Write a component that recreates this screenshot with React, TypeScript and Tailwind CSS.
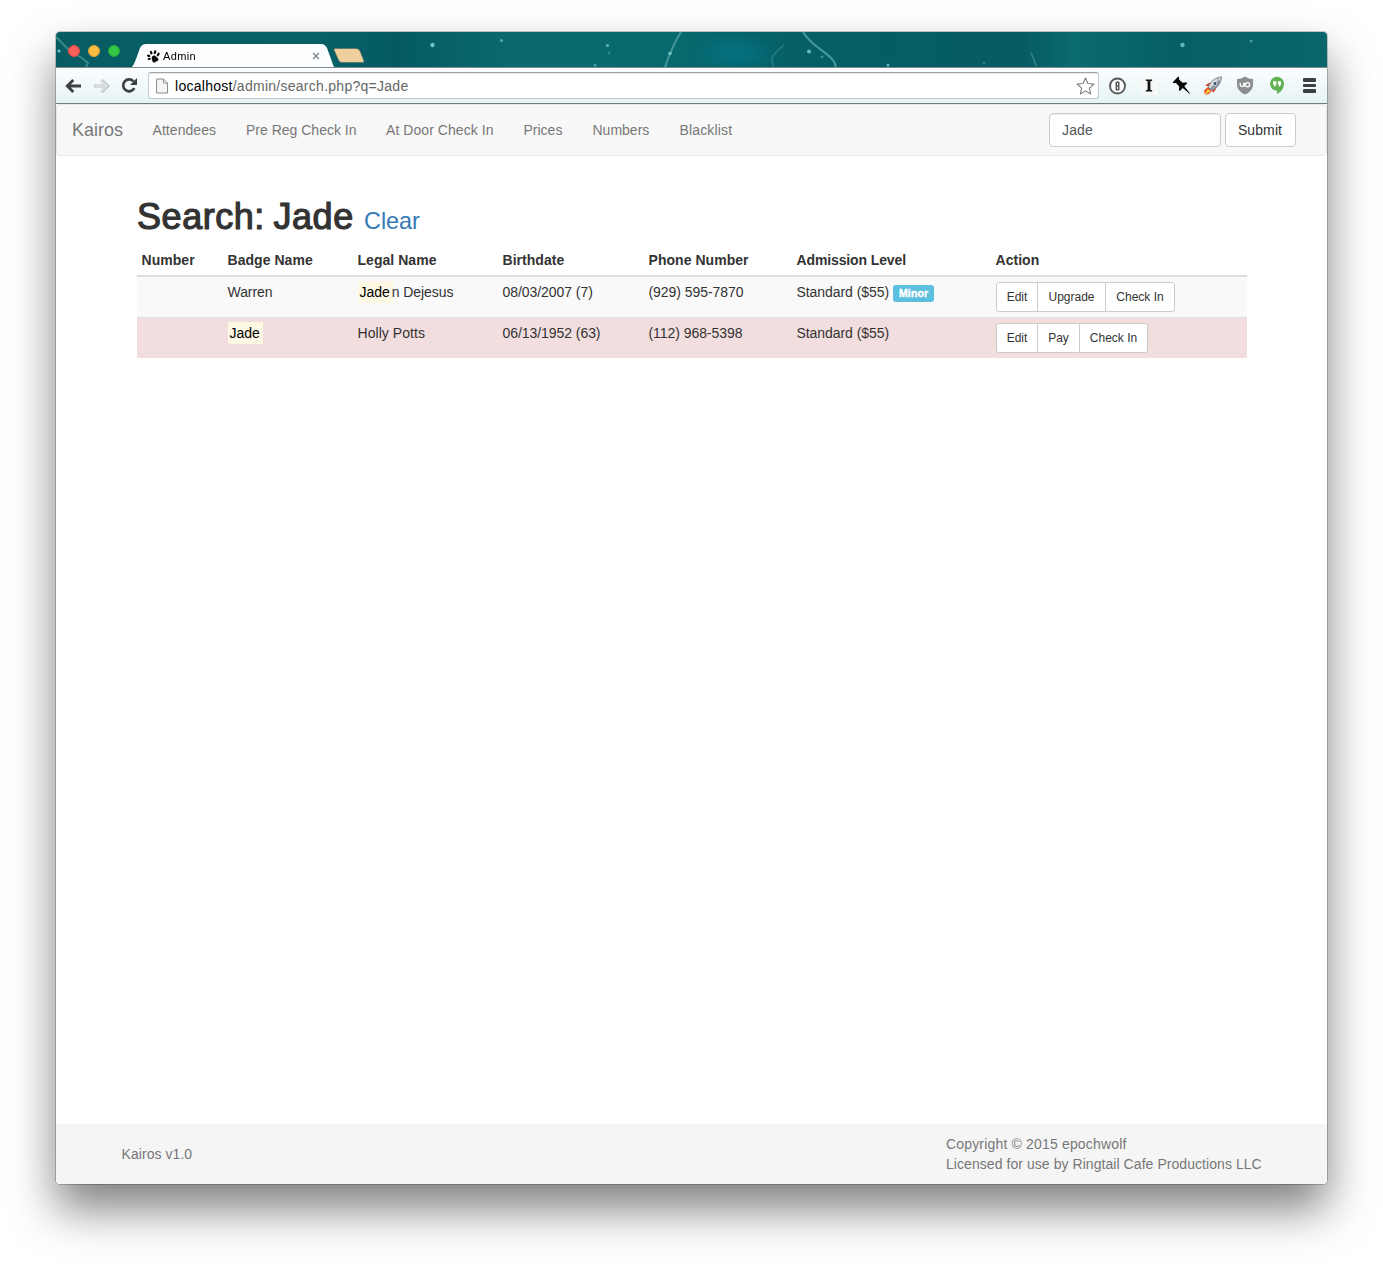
import React from 'react';

function SkyBackdrop() {
  return (
    <svg className="absolute inset-0" width="1271" height="35" viewBox="0 0 1271 35">
      <defs>
        <linearGradient id="sky" x1="0" x2="1" y1="0" y2="0">
          <stop offset="0" stopColor="#075c62" />
          <stop offset="0.2" stopColor="#086168" />
          <stop offset="0.27" stopColor="#055a62" />
          <stop offset="0.36" stopColor="#0a6a70" />
          <stop offset="0.5" stopColor="#07686e" />
          <stop offset="0.58" stopColor="#055f66" />
          <stop offset="0.76" stopColor="#065b61" />
          <stop offset="0.8" stopColor="#0a6b70" />
          <stop offset="0.88" stopColor="#055f66" />
          <stop offset="1" stopColor="#09666c" />
        </linearGradient>
        <radialGradient id="glow">
          <stop offset="0" stopColor="#04778a" stopOpacity=".75" />
          <stop offset="1" stopColor="#04778a" stopOpacity="0" />
        </radialGradient>
        <filter id="soft" x="-50%" y="-50%" width="200%" height="200%">
          <feGaussianBlur stdDeviation="0.7" />
        </filter>
      </defs>
      <rect width="1271" height="35" fill="url(#sky)" />
      <ellipse cx="680" cy="21" rx="45" ry="20" fill="url(#glow)" />
      <g fill="none" stroke="#5fa8a8" filter="url(#soft)">
        <path d="M0 5 14 19M14 19l12 7 6 5-2 4" strokeWidth="2" opacity=".6" />
        <path d="M625 0q-8 12-16 35" strokeWidth="2" opacity=".7" />
        <path d="M747 0c8 13 20 18 28 26q6 6 4 9" strokeWidth="2.200" opacity=".75" />
        <path d="M728 13q-12 10-12 14l1 8" strokeWidth="1.600" opacity=".4" />
        <path d="M975 21q3 6 5 13" strokeWidth="1.800" opacity=".45" />
      </g>
      <g fill="#6fc4c4" filter="url(#soft)">
        <circle cx="3" cy="19" r="1.600" />
        <circle cx="376.500" cy="13" r="2.200" />
        <circle cx="445.500" cy="8.500" r="1.600" opacity=".7" />
        <circle cx="551.500" cy="13.500" r="1.600" opacity=".8" />
        <circle cx="614" cy="21.500" r="1.800" />
        <circle cx="539" cy="33" r="1.600" opacity=".6" />
        <circle cx="553" cy="21" r="1.400" opacity=".4" />
        <circle cx="753" cy="19.500" r="2" opacity=".9" />
        <circle cx="766" cy="25" r="1.400" opacity=".5" />
        <circle cx="832" cy="33" r="1.600" opacity=".8" />
        <circle cx="928" cy="31" r="1.200" opacity=".4" />
        <circle cx="1126.500" cy="13" r="2.200" opacity=".9" />
        <circle cx="1195" cy="9" r="1.500" opacity=".6" />
      </g>
    </svg>
  );
}

function PawIcon() {
  return (
    <svg width="13" height="13" viewBox="0 0 13 13" fill="#0a0a0a">
      <ellipse cx="1.700" cy="5.800" rx="1.700" ry="1.200" transform="rotate(25 1.700 5.800)" />
      <ellipse cx="4.200" cy="2.600" rx="1.200" ry="2" transform="rotate(-18 4.200 2.600)" />
      <ellipse cx="8" cy="2.200" rx="1.200" ry="2.100" transform="rotate(12 8 2.200)" />
      <ellipse cx="11.200" cy="4.500" rx="1.150" ry="2" transform="rotate(28 11.200 4.500)" />
      <ellipse cx="2.300" cy="9" rx="1.700" ry="1" transform="rotate(-15 2.300 9)" />
      <path d="M6.800 5.500C8.800 5.300 9.300 7 10.500 7.800 12 9 11.700 10.600 10.300 11 9 11.300 8.600 12.700 7 12.500 5.300 12.400 5.500 11 5 9.800 4.300 8 4.900 5.800 6.800 5.500Z" />
    </svg>
  );
}

function TitleBar() {
  return (
    <div className="relative flex h-[36px] items-end overflow-hidden rounded-t-[4px] border-b border-[#7e8a8c]">
      <SkyBackdrop />
      <div className="relative flex w-[74px] gap-2 self-start pt-[13px] pl-3">
        <span className="size-3 shrink-0 rounded-full border border-[#e0484a] bg-[#fc605b]" />
        <span className="size-3 shrink-0 rounded-full border border-[#dea236] bg-[#fdbc40]" />
        <span className="size-3 shrink-0 rounded-full border border-[#27aa35] bg-[#34c84a]" />
      </div>
      <div className="relative -mb-px h-[25px] w-[206px]">
        <svg className="absolute inset-0" width="206" height="25" viewBox="0 0 206 25">
          <path d="M0 25C3 24 4 21 6 16L10 5Q12 1 16 1H191Q195 1 197 5L201 16C203 21 203 24 206 25Z" fill="#fcfeff" />
        </svg>
        <div className="relative flex h-full items-center pt-px pl-[16.500px]">
          <PawIcon />
          <span className="ml-[3.500px] text-[11px] tracking-[0.350px] text-black">Admin</span>
          <svg className="ml-[116px]" width="8" height="8" viewBox="0 0 9 9" stroke="#858a8c" strokeWidth="1.700">
            <path d="m1.200 1.200 6.600 6.600M7.800 1.200 1.200 7.800" />
          </svg>
        </div>
      </div>
      <svg className="relative mb-[4px] -ml-[3px]" width="32" height="15" viewBox="0 0 32 15">
        <path d="M2 .5H23Q26 .5 27 3L31 13Q31.300 14.500 29.500 14.500H9Q6.500 14.500 5.500 12L1 2Q.5 .5 2 .5Z" fill="#efcf9e" stroke="#4c6c62" strokeWidth=".6" />
      </svg>
    </div>
  );
}

function AddressBar() {
  return (
    <div className="flex h-[36px] items-center border-b border-[#6f7b7c] bg-linear-to-b from-[#fbfdff] to-[#e6f4f5]">
      <svg className="ml-[9px]" width="17" height="16" viewBox="0 0 17 16" fill="none" stroke="#3d4143" strokeWidth="2.800">
        <path d="M16 8H3M8.300 2 2.300 8l6 6" strokeLinejoin="miter" />
      </svg>
      <svg className="ml-[11px]" width="17" height="16" viewBox="0 0 17 16" fill="none">
        <path d="M1 8H14M8.700 2l6 6-6 6" stroke="#b9bfc1" strokeWidth="3" />
        <path d="M1.700 8H13.500M9 2.800 14.100 8 9 13.200" stroke="#e3e8ea" strokeWidth="1.300" />
      </svg>
      <svg className="ml-[11px]" width="17" height="17" viewBox="0 0 17 17">
        <path d="M13.300 11.200A5.900 5.900 0 1 1 12.500 4.400" fill="none" stroke="#3d4143" strokeWidth="2.700" />
        <path d="M16 1v7H9Z" fill="#3d4143" />
      </svg>
      <div className="ml-[10px] flex h-[27px] w-[951px] items-center rounded-[3px] border border-[#c3c8c9] border-t-[#9fa4a6] bg-white shadow-[inset_0_1px_0_#e6e8e9]">
        <svg className="ml-[7px]" width="12" height="16" viewBox="0 0 12 16" fill="#f5f5f5" stroke="#8e8e8e">
          <path d="M.5 1H7.500L11.500 5V15H.5ZM7.500 1V5H11.500" />
        </svg>
        <span className="ml-[7px] text-[14px] tracking-[0.270px] whitespace-nowrap text-[#666]">
          <span className="text-black">localhost</span>/admin/search.php?q=Jade
        </span>
        <svg className="mr-[3px] ml-auto" width="19" height="18" viewBox="0 0 19 18" fill="white" stroke="#7e7e7e" strokeWidth="1.100">
          <path d="M9.500 1 11.900 6.500 18 7.100 13.400 11.100 14.700 17 9.500 13.900 4.300 17 5.600 11.100 1 7.100 7.100 6.500Z" strokeLinejoin="round" />
        </svg>
      </div>
      <Extensions />
    </div>
  );
}

function Extensions() {
  return (
    <>
      <svg className="ml-[9px]" width="18" height="18" viewBox="0 0 18 18">
        <circle cx="9.500" cy="9" r="7.500" fill="#fff" stroke="#565656" strokeWidth="1.900" />
        <rect x="7.500" y="4.500" width="4" height="9" rx="1" fill="#565656" />
        <path d="M9.500 6v2.300M9.500 9.700V12" stroke="#fff" strokeWidth="1" />
      </svg>
      <span className="ml-[14px] flex h-[18px] w-[18px] items-center justify-center bg-[#f7f8f8]">
        <svg width="8" height="13" viewBox="0 0 8 13">
          <path d="M.8 .5h6.400v1.300l-1.800.5v8.400l1.800.5v1.300H.8v-1.300l1.800-.5V2.300L.8 1.800Z" fill="#161616" />
        </svg>
      </span>
      <svg className="ml-[14px]" width="19" height="19" viewBox="0 0 19 19" fill="#080808">
        <path d="M6.300 .6 7.200 1.500 7 3.600 10.700 6.700 14.300 6.300 15.300 7.300 12.300 10.300 18.300 17.800 17.900 18.100 10.700 12 7.900 15 6.900 14.200 7.200 10.600 4 7.100 1.600 7.300.7 6.300Z" />
      </svg>
      <svg className="ml-[12px]" width="20" height="20" viewBox="0 0 20 20">
        <path d="M2 9.500 6 7l5-1-2 5ZM10 17l3-4 .8-5L8 11Z" fill="#d43c20" />
        <path d="M5.500 10.500 1 14.500 2 18.500 6 18 9.500 14Z" fill="#ec4b20" />
        <path d="M5 13 1.200 18.700 7.500 15.500Z" fill="#ffd23c" />
        <path d="M18.500 1C12 1.500 8 5 5 11l3.500 3.500C14.500 12 18 7.500 18.500 1Z" fill="#d2d7dd" stroke="#60666d" strokeWidth=".7" />
        <path d="M18.500 1 6.500 13l2 1.500C14.500 12 18 7.500 18.500 1Z" fill="#8d949d" />
        <path d="M18.500 1q-3 0-5 1.200l3.500 3.600Q18.400 4 18.500 1Z" fill="#c6cbd0" stroke="#7d858c" strokeWidth=".5" />
        <circle cx="12" cy="7.500" r="2" fill="#36566d" stroke="#eee" strokeWidth=".8" />
      </svg>
      <svg className="ml-[13px]" width="18" height="19" viewBox="0 0 18 19">
        <path d="M9 .5Q12.500 3 17 3V8.500Q17 15 9 18.600 1 15 1 8.500V3Q5.500 3 9 .5Z" fill="#8c8f90" />
        <path d="M4.200 6.700v2.100a1.800 1.800 0 0 0 3.600 0V6.700M8.500 6.700v3.800" fill="none" stroke="white" strokeWidth="1.300" />
        <circle cx="11.500" cy="8.700" r="2.100" fill="none" stroke="white" strokeWidth="1.300" />
      </svg>
      <svg className="ml-[15px]" width="16" height="19" viewBox="0 0 16 19">
        <path d="M8 .8a7 7 0 0 1 7 7c0 4.600-3.200 8.300-7 10.400v-3.400a7 7 0 0 1 0-14Z" fill="#61b252" />
        <path d="M4 5.200h3.300v3.200L5.800 10.500H4.600l.8-2.100H4ZM8.800 5.200h3.300v3.200l-1.500 2.100H9.400l.8-2.100H8.800Z" fill="white" />
      </svg>
      <span className="ml-[18px] flex flex-col gap-[2px]">
        <span className="h-[3.500px] w-[13px] rounded-[1px] bg-[#3c4042]" />
        <span className="h-[3.500px] w-[13px] rounded-[1px] bg-[#3c4042]" />
        <span className="h-[3.500px] w-[13px] rounded-[1px] bg-[#3c4042]" />
      </span>
    </>
  );
}

function Navbar() {
  return (
    <nav className="flex h-[52px] items-center rounded-[4px] border border-[#e7e7e7] bg-[#f8f8f8] text-[#777]">
      <a className="w-[81px] pl-[15px] text-[18px] leading-5">Kairos</a>
      <a className="w-[93.500px] pl-[14.500px] tracking-[0.060px]">Attendees</a>
      <a className="w-[139.500px] pl-[14.500px]">Pre Reg Check In</a>
      <a className="w-[137.500px] pl-[15px] tracking-[0.060px]">At Door Check In</a>
      <a className="w-[69px] pl-[15px]">Prices</a>
      <a className="w-[87px] pl-[15px]">Numbers</a>
      <a className="pl-[15px] tracking-[0.150px]">Blacklist</a>
      <form className="mr-[30px] ml-auto flex gap-1">
        <input
          className="h-[34px] w-[172px] rounded-[4px] border border-[#ccc] bg-white px-3 tracking-[0.150px] text-[#555] shadow-[inset_0_1px_1px_rgba(0,0,0,.075)] outline-none"
          defaultValue="Jade"
        />
        <button type="button" className="h-[34px] w-[71px] rounded-[4px] border border-[#ccc] bg-white pr-px text-center tracking-[0.100px] text-[#333]">
          Submit
        </button>
      </form>
    </nav>
  );
}

function Mark({ children }: { children: React.ReactNode }) {
  return <mark className="-my-px inline-block h-[22px] bg-[#fcf8e3] py-px pr-[3px] pl-[2px] leading-5 text-black">{children}</mark>;
}

function Actions({ items }: { items: { label: string; width: string }[] }) {
  return (
    <div className="flex pl-[0.500px]">
      {items.map((item) => (
        <button
          key={item.label}
          type="button"
          className={`-ml-px h-[30px] border border-[#ccc] bg-white text-center text-[12px] tracking-normal text-[#333] first:ml-0 first:rounded-l-[3px] last:rounded-r-[3px] ${item.width}`}
        >
          {item.label}
        </button>
      ))}
    </div>
  );
}

function ResultsTable() {
  return (
    <table className="mt-[8px] w-[1110px] table-fixed border-separate border-spacing-0 text-left tracking-[-0.060px] [&_td]:p-[5px] [&_td]:pl-[4.500px] [&_td]:align-top [&_th]:border-b-2 [&_th]:border-[#ddd] [&_th]:p-[5px] [&_th]:pl-[4.500px] [&_th]:font-bold [&_th]:tracking-[0.040px]">
      <colgroup>
        <col className="w-[86px]" />
        <col className="w-[130px]" />
        <col className="w-[145px]" />
        <col className="w-[146px]" />
        <col className="w-[148px]" />
        <col className="w-[199px]" />
        <col className="w-[256px]" />
      </colgroup>
      <thead>
        <tr>
          <th>Number</th>
          <th>Badge Name</th>
          <th>Legal Name</th>
          <th>Birthdate</th>
          <th>Phone Number</th>
          <th><span className="tracking-[-0.120px]">Admission Level</span></th>
          <th>Action</th>
        </tr>
      </thead>
      <tbody>
        <tr className="bg-[#f9f9f9]">
          <td />
          <td>Warren</td>
          <td><Mark>Jade</Mark><span className="-ml-px">n Dejesus</span></td>
          <td>08/03/2007 (7)</td>
          <td>(929) 595-7870</td>
          <td>
            <div className="flex">
              Standard ($55)
              <span className="mt-[3px] ml-1 h-[17px] w-[41px] rounded-[3px] bg-[#5bc0de] text-center text-[10.500px] leading-[17px] font-bold tracking-[0.100px] text-white [-webkit-text-stroke:0.4px_white]">
                Minor
              </span>
            </div>
          </td>
          <td>
            <Actions
              items={[
                { label: 'Edit', width: 'w-[42px]' },
                { label: 'Upgrade', width: 'w-[69px]' },
                { label: 'Check In', width: 'w-[70px]' },
              ]}
            />
          </td>
        </tr>
        <tr className="bg-[#f2dede] [&_td]:border-t [&_td]:border-[#ddd]">
          <td />
          <td><Mark>Jade</Mark></td>
          <td><span className="tracking-[0.050px]">Holly Potts</span></td>
          <td>06/13/1952 (63)</td>
          <td>(112) 968-5398</td>
          <td>Standard ($55)</td>
          <td>
            <Actions
              items={[
                { label: 'Edit', width: 'w-[42px]' },
                { label: 'Pay', width: 'w-[43px]' },
                { label: 'Check In', width: 'w-[69px]' },
              ]}
            />
          </td>
        </tr>
      </tbody>
    </table>
  );
}

export default function App() {
  return (
    <div className="h-[1264px] w-[1383px] overflow-hidden bg-white px-[56px] pt-[32px] font-['Liberation_Sans',Arial,sans-serif] text-[14px] leading-5 text-[#333]">
      <div className="flex h-[1152px] w-[1271px] flex-col rounded-[4px] bg-white shadow-[0_0_0_1px_rgba(0,0,0,.2),0_25px_46px_rgba(0,0,0,.5)]">
        <TitleBar />
        <AddressBar />
        <Navbar />
        <main className="flex-1 px-[81px] pt-[41px]">
          <h1 className="flex items-baseline text-[36px] leading-10 font-medium">
            <span className="w-[227px] tracking-[0.550px] whitespace-nowrap [-webkit-text-stroke:1.2px_#333] [word-spacing:-2px]">Search: Jade</span>
            <a className="text-[23.400px] leading-6 font-normal text-[#337ab7]">Clear</a>
          </h1>
          <ResultsTable />
        </main>
        <footer className="flex h-[60px] items-center justify-between rounded-b-[4px] bg-[#f5f5f5] pr-[65px] pl-[65.500px] tracking-[0.060px] text-[#777]">
          <span>Kairos v1.0</span>
          <div className="w-[316px] whitespace-nowrap">
            <p className="tracking-[0.170px]">Copyright © 2015 epochwolf</p>
            <p>Licensed for use by Ringtail Cafe Productions LLC</p>
          </div>
        </footer>
      </div>
    </div>
  );
}
